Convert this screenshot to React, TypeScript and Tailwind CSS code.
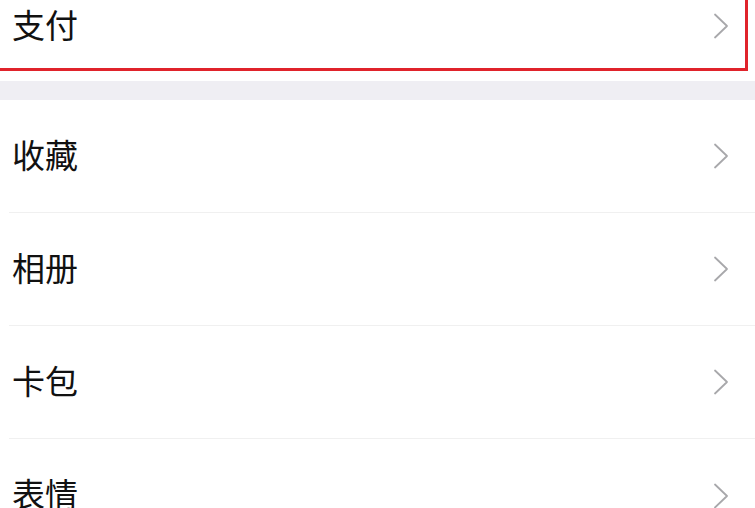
const font = { fontFamily: '"Noto Sans CJK SC", "Noto Sans", sans-serif' }

function Chevron() {
  return (
    <svg width="16" height="26" viewBox="0 0 16 26" fill="none" className="shrink-0">
      <path d="M2 1.5 L14 13 L2 24.5" stroke="#a8a8ab" strokeWidth="1.8" strokeLinecap="round" strokeLinejoin="round" />
    </svg>
  )
}

const items = ["收藏", "相册", "卡包", "表情"]

export default function App() {
  return (
    <div className="w-[755px] h-[508px] overflow-hidden bg-white text-[#111111]" style={font}>
      {/* highlighted row, top is cut off */}
      <div className="pr-[7px]">
        <div className="h-[71px] border-b-[3px] border-r-[3px] border-[#e0232b] flex items-start">
          <div className="flex-1 h-[51px] flex items-center justify-between pl-[12px] pr-[16px]">
            <span className="text-[33px] leading-none mb-[2px]">支付</span>
            <Chevron />
          </div>
        </div>
      </div>
      <div className="h-[10px] bg-white" />
      <div className="h-[19px] bg-[#efeef3]" />
      <div>
        {items.map((label, i) => (
          <div key={label} className="pl-[9px]">
            <div
              className={
                i < items.length - 1
                  ? "h-[113px] flex items-center justify-between pl-[3px] pr-[26px] border-b border-[#f0f0f0]"
                  : "h-[113px] flex items-center justify-between pl-[3px] pr-[26px]"
              }
            >
              <span className="text-[33px] leading-none mb-[4px]">{label}</span>
              <Chevron />
            </div>
          </div>
        ))}
      </div>
    </div>
  )
}
